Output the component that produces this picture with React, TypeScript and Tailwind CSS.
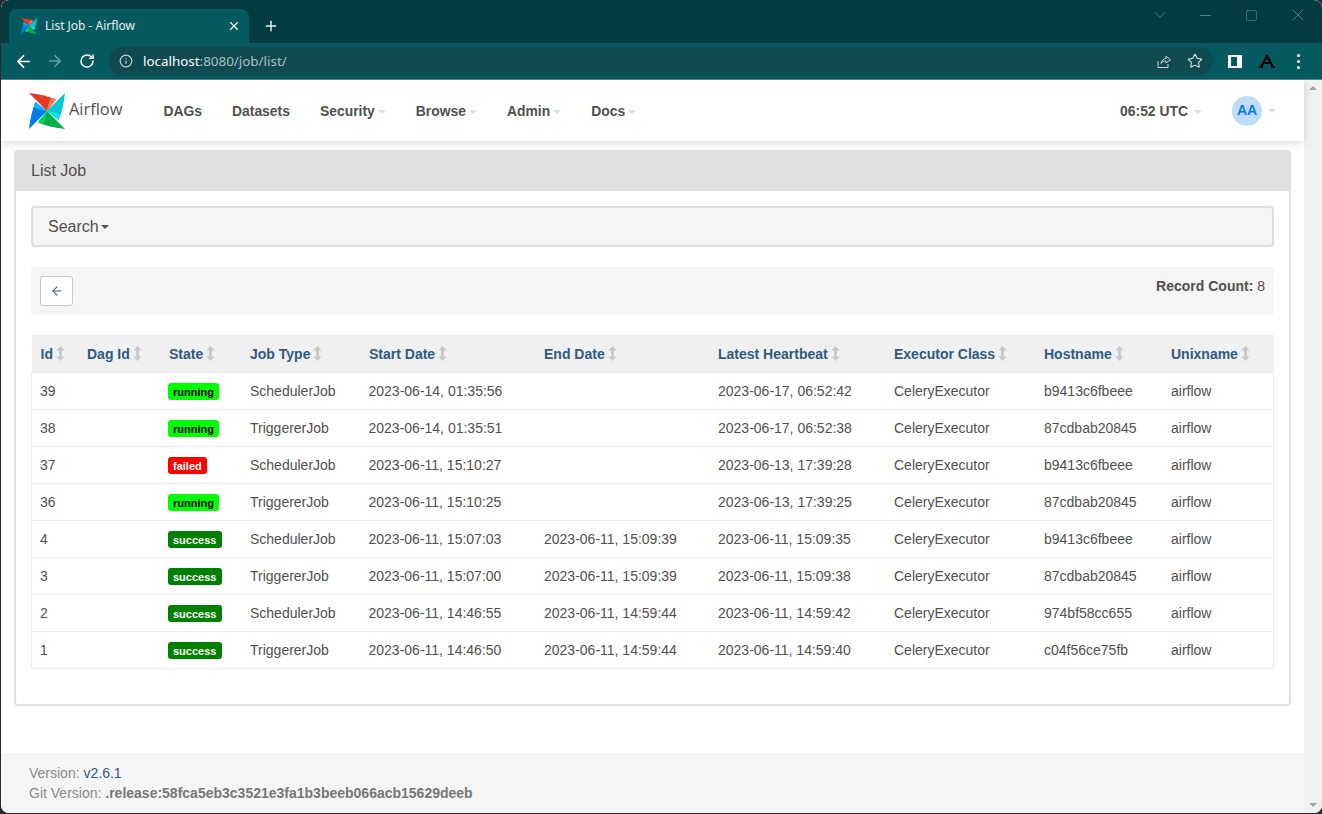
import React from 'react';
import { ArrowLeft, ArrowRight, RotateCw, Info, Star, X, Plus, Minus, ChevronDown, Square } from 'lucide-react';

const JOBS = [
  { id: '39', state: 'running', type: 'SchedulerJob', start: '2023-06-14, 01:35:56', end: '', beat: '2023-06-17, 06:52:42', host: 'b9413c6fbeee' },
  { id: '38', state: 'running', type: 'TriggererJob', start: '2023-06-14, 01:35:51', end: '', beat: '2023-06-17, 06:52:38', host: '87cdbab20845' },
  { id: '37', state: 'failed', type: 'SchedulerJob', start: '2023-06-11, 15:10:27', end: '', beat: '2023-06-13, 17:39:28', host: 'b9413c6fbeee' },
  { id: '36', state: 'running', type: 'TriggererJob', start: '2023-06-11, 15:10:25', end: '', beat: '2023-06-13, 17:39:25', host: '87cdbab20845' },
  { id: '4', state: 'success', type: 'SchedulerJob', start: '2023-06-11, 15:07:03', end: '2023-06-11, 15:09:39', beat: '2023-06-11, 15:09:35', host: 'b9413c6fbeee' },
  { id: '3', state: 'success', type: 'TriggererJob', start: '2023-06-11, 15:07:00', end: '2023-06-11, 15:09:39', beat: '2023-06-11, 15:09:38', host: '87cdbab20845' },
  { id: '2', state: 'success', type: 'SchedulerJob', start: '2023-06-11, 14:46:55', end: '2023-06-11, 14:59:44', beat: '2023-06-11, 14:59:42', host: '974bf58cc655' },
  { id: '1', state: 'success', type: 'TriggererJob', start: '2023-06-11, 14:46:50', end: '2023-06-11, 14:59:44', beat: '2023-06-11, 14:59:40', host: 'c04f56ce75fb' },
];

const COLUMNS = [
  { label: 'Id', width: 'w-[46px]' },
  { label: 'Dag Id', width: 'w-[82px]' },
  { label: 'State', width: 'w-[81px]' },
  { label: 'Job Type', width: 'w-[119px]' },
  { label: 'Start Date', width: 'w-[175px]' },
  { label: 'End Date', width: 'w-[174px]' },
  { label: 'Latest Heartbeat', width: 'w-[176px]' },
  { label: 'Executor Class', width: 'w-[150px]' },
  { label: 'Hostname', width: 'w-[127px]' },
  { label: 'Unixname', width: 'w-auto' },
];

const NAV = [
  { label: 'DAGs' },
  { label: 'Datasets' },
  { label: 'Security', caret: true },
  { label: 'Browse', caret: true },
  { label: 'Admin', caret: true },
  { label: 'Docs', caret: true },
];

// Airflow pinwheel, one blade rotated four times
const Pinwheel = ({ size }: { size: number }) => {
  const blades = [
    ['#e43921', '#ff7557', 0],
    ['#00c7d4', '#11e1ee', 90],
    ['#00ad46', '#04d659', 180],
    ['#017cee', '#0cb6ff', 270],
  ] as const;
  return (
    <svg width={size} height={size} viewBox="0 0 36 36">
      {blades.map(([dark, light, angle]) => (
        <g key={angle} transform={`rotate(${angle} 18 18)`}>
          <path d="M0 0 C9 1 19 3 27 6.5 L18 18Z" fill={dark} />
          <path d="M22 4.7 C24 5.2 25.5 5.8 27 6.5 L18 18 C18.5 13 20 8.5 22 4.7Z" fill={light} />
        </g>
      ))}
    </svg>
  );
};

const Caret = ({ gap }: { gap: string }) => (
  <span className={`inline-block ${gap} w-0 h-0 border-x-[4px] border-x-transparent border-t-[4px] border-t-[#e3dbe5] align-middle`} />
);

const SortIcon = () => (
  <svg width="9" height="15" viewBox="0 0 9 15" className="inline-block ml-[3px] align-[-2px]" fill="#c8c8c8">
    <path d="M4.5 0 L8.5 4.5 H6 V10.5 H8.5 L4.5 15 L0.5 10.5 H3 V4.5 H0.5Z" />
  </svg>
);

const Badge = ({ state }: { state: string }) => {
  const color =
    state === 'running'
      ? 'bg-[#00ff00] text-black'
      : state === 'failed'
        ? 'bg-[#ff0000] text-white'
        : 'bg-[#008000] text-white';
  return (
    <span className={`inline-block -mt-px px-[5.5px] h-[17px] leading-[18px] rounded-[3px] text-[11px] font-bold align-middle ${color}`}>
      {state}
    </span>
  );
};

const ChromeBar = () => (
  <div className="shrink-0 font-['Noto_Sans',sans-serif]">
    {/* Tab strip */}
    <div className="h-[43px] bg-[#033a40] flex items-end pl-[8px] rounded-t-lg">
      <div className="w-[240px] h-[34px] bg-[#055a60] rounded-t-lg flex items-center pl-[12px] pr-[8px] text-white">
        <Pinwheel size={16} />
        <span className="ml-[8px] text-[12px] flex-1 text-[#e8f0f0]">List Job - Airflow</span>
        <X size={14} strokeWidth={2} />
      </div>
      <div className="h-[34px] flex items-center ml-[14px] text-[#e8f0f0]">
        <Plus size={16} strokeWidth={2.2} />
      </div>
      <div className="flex-1 h-[30px] self-start flex items-center justify-end text-[#7f9ea1] pr-[14px]">
        <ChevronDown size={20} strokeWidth={0.8} className="mr-[27px]" />
        <Minus size={17} strokeWidth={1} className="mr-[31px]" />
        <Square size={13} strokeWidth={1} className="mr-[30px]" />
        <X size={20} strokeWidth={0.8} />
      </div>
    </div>
    {/* Toolbar */}
    <div className="h-[37px] bg-[#055a60] border-b border-b-[#4f8f93] flex items-center pl-[13px] pr-[13px]">
      <ArrowLeft size={19} strokeWidth={2.2} className="text-white" />
      <ArrowRight size={18} strokeWidth={2.2} className="ml-[13px] text-[#6f9ea2]" />
      <RotateCw size={16} strokeWidth={2.2} className="ml-[15px] text-white" />
      <div className="ml-[14px] w-[1104px] h-[28px] rounded-full bg-[#0f4a50] flex items-center pl-[10px] pr-[10px]">
        <Info size={14} className="text-[#c5d3d5]" />
        <span className="ml-[10px] text-[13.4px] text-white">
          localhost<span className="text-[#a9c0c2]">:8080/job/list/</span>
        </span>
        <svg width="16" height="16" viewBox="0 0 16 16" className="ml-auto text-[#c5d3d5]" fill="none" stroke="currentColor" strokeWidth="1">
          <path d="M3 8 V14.5 H13 V11" />
          <path d="M6 10.5 C6.5 7 9 5.5 11 5.5 V3 L15.5 6.8 L11 10 V8 C9 8 7 8.5 6 10.5Z" />
        </svg>
        <Star size={16} strokeWidth={1.6} className="ml-[16px] text-[#dfe7e8]" />
      </div>
      <div className="ml-[15px] w-[14px] h-[13px] bg-white flex pl-[3px] py-[2px]">
        <div className="w-[6px] bg-[#055a60]" />
      </div>
      <svg width="18" height="14" viewBox="0 0 18 14" className="ml-[16px]" fill="none" stroke="#000" strokeWidth="2.2">
        <path d="M1 13 H5 M13 13 H17 M3 13 L9 2 L15 13 M5 9 H13" />
      </svg>
      <div className="ml-[21px] flex flex-col gap-[3px]">
        <span className="w-[3px] h-[3px] bg-white rounded-full" />
        <span className="w-[3px] h-[3px] bg-white rounded-full" />
        <span className="w-[3px] h-[3px] bg-white rounded-full" />
      </div>
    </div>
  </div>
);

const TopNav = () => (
  <div className="h-[61px] shrink-0 bg-white shadow-[0_2px_8px_rgba(0,0,0,0.15)] flex items-center pl-[28px] pr-[28px] relative z-10 text-[13.9px] font-bold text-[#51504f]">
    <Pinwheel size={36} />
    <span className="ml-[4px] mr-[26px] font-['Open_Sans',sans-serif] font-normal text-[16.4px] mb-[3px]">Airflow</span>
    {NAV.map((item) => (
      <span key={item.label} className="px-[15px] pt-px whitespace-nowrap">
        {item.label}
        {item.caret && <Caret gap="ml-[3px]" />}
      </span>
    ))}
    <span className="ml-auto pt-px whitespace-nowrap">
      06:52 UTC
      <Caret gap="ml-[6px]" />
    </span>
    <div className="ml-[30px] mr-[6px] w-[30px] h-[30px] rounded-full bg-[#bfdcfb] text-[#017cee] flex items-center justify-center text-[14px]">AA</div>
    <Caret gap="ml-0" />
  </div>
);

const JobTable = () => (
  <table className="w-full table-fixed border-collapse text-[14px]">
    <colgroup>
      {COLUMNS.map((col) => (
        <col key={col.label} className={col.width} />
      ))}
    </colgroup>
    <thead>
      <tr className="h-[37px] bg-[#f0f0f0] text-left text-[#2e5b82]">
        {COLUMNS.map((col) => (
          <th key={col.label} className="pl-[9.5px] pr-0 pt-[3px] font-bold whitespace-nowrap first:pl-[9px]">
            {col.label}
            <SortIcon />
          </th>
        ))}
      </tr>
    </thead>
    <tbody>
      {JOBS.map((job) => (
        <tr key={job.id} className="h-[37px] border border-[#ececec]">
          <td className="px-[8px] pt-[2px]">{job.id}</td>
          <td className="px-[9px]" />
          <td className="px-[8px] pt-[2px]"><Badge state={job.state} /></td>
          <td className="pl-[9.5px] pt-[2px]">{job.type}</td>
          <td className="pl-[9px] pt-[2px]">{job.start}</td>
          <td className="pl-[9.5px] pt-[2px]">{job.end}</td>
          <td className="pl-[9.5px] pt-[2px]">{job.beat}</td>
          <td className="pl-[9.5px] pt-[2px]">CeleryExecutor</td>
          <td className="pl-[9.5px] pt-[2px]">{job.host}</td>
          <td className="pl-[9.5px] pt-[2px]">airflow</td>
        </tr>
      ))}
    </tbody>
  </table>
);

export default function App() {
  return (
    <div className="h-[814px] w-[1322px] overflow-hidden bg-[#2a2a2a] font-['Liberation_Sans',Arial,sans-serif] text-[14px] text-[#51504f]">
      <div className="h-[813px] ml-px rounded-b-lg rounded-t-lg overflow-hidden flex flex-col bg-white">
        <ChromeBar />
        <div className="flex-1 flex min-h-0">
          <div className="flex-1 flex flex-col min-w-0">
            <TopNav />
            <main className="flex-1 pt-[9px] pl-[13px] pr-[13px]">
              <section className="h-[556px] border-2 border-[#e0e0e0] rounded-[4px]">
                <div className="h-[40px] -mt-px bg-[#e0e0e0] px-[15px] flex items-center text-[16px]">List Job</div>
                <div className="px-[15px] pt-[15px]">
                  <div className="h-[41px] bg-[#f5f5f5] border-2 border-[#dddddd] rounded-[4px] px-[15px] flex items-center text-[16px]">
                    Search
                    <span className="ml-[2px] w-0 h-0 border-x-[4px] border-x-transparent border-t-[4px] border-t-[#51504f]" />
                  </div>
                  <div className="mt-[20px] h-[48px] bg-[#f5f5f5] rounded-[4px] pl-[9px] pr-[9px] flex justify-between items-start">
                    <div className="mt-[9px] w-[33px] h-[30px] bg-white border border-[#c8c8c8] rounded-[3px] flex items-center justify-center">
                      <ArrowLeft size={14} strokeWidth={1.8} className="text-[#2e5b82]" />
                    </div>
                    <div className="mt-[9px]">
                      <b>Record Count:</b> 8
                    </div>
                  </div>
                  <div className="mt-[20px]">
                    <JobTable />
                  </div>
                </div>
              </section>
            </main>
            <footer className="h-[60px] shrink-0 bg-[#f5f5f5] pl-[28px] pt-[10px] leading-[20px] text-[#8a8a8a]">
              <div>
                Version: <span className="text-[#2e5b82]">v2.6.1</span>
              </div>
              <div>
                Git Version: <b className="text-[#777777]">.release:58fca5eb3c3521e3fa1b3beeb066acb15629deeb</b>
              </div>
            </footer>
          </div>
          {/* Browser scrollbar */}
          <div className="w-[18px] shrink-0 bg-[#f1f1f1] flex flex-col items-center justify-between py-[6px]">
            <span className="w-0 h-0 border-x-[4px] border-x-transparent border-b-[4px] border-b-[#a3a3a3]" />
            <span className="w-0 h-0 border-x-[4px] border-x-transparent border-t-[4px] border-t-[#a3a3a3]" />
          </div>
        </div>
      </div>
    </div>
  );
}
